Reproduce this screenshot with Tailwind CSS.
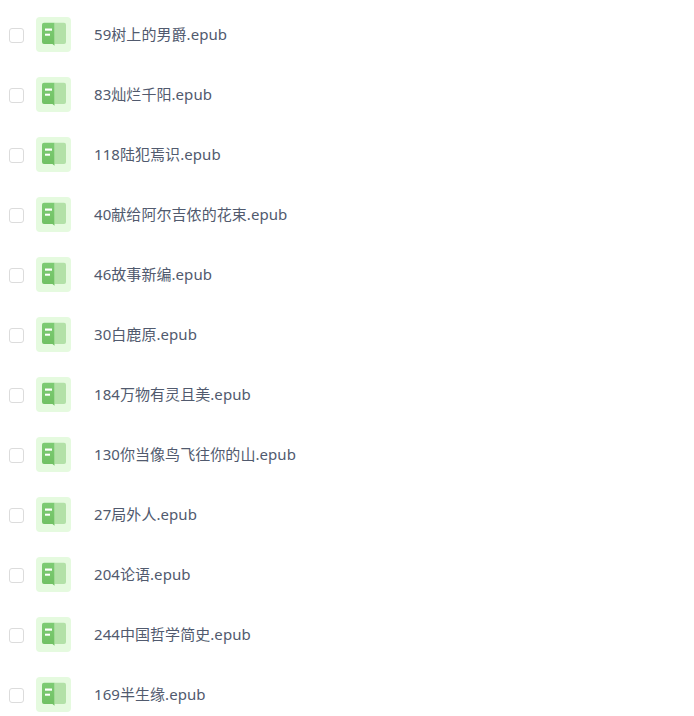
<!DOCTYPE html>
<html lang="zh">
  <head>
    <meta charset="UTF-8" />
    <title>文件列表</title>
    <script src="https://cdn.jsdelivr.net/npm/@tailwindcss/browser@4"></script>
  </head>
  <body class="bg-white overflow-hidden h-[716px] font-['Noto_Sans','Noto_Sans_CJK_SC',sans-serif] text-[15px] tracking-[0.06px] text-[#515a6e]">
    <svg width="0" height="0" class="absolute">
      <defs>
        <linearGradient id="cover" x1="0" y1="0" x2="0" y2="1">
          <stop offset="0" stop-color="#7ecb74" />
          <stop offset="1" stop-color="#6fc062" />
        </linearGradient>
      </defs>
      <symbol id="book" viewBox="0 0 35 35">
        <rect width="35" height="35" rx="4" fill="#e5fadf" />
        <path d="M18.500 5.700h9.500a2 2 0 0 1 2 2v17.300a2 2 0 0 1-2 2h-9.500z" fill="#b3e1a8" />
        <path d="M6 7.700a2 2 0 0 1 2-2h10.500v23l-2-1.700h-8.500a2 2 0 0 1-2-2z" fill="url(#cover)" />
        <rect x="9" y="11.500" width="7" height="2.200" fill="#fff" />
        <rect x="9" y="16.700" width="5" height="2" fill="#fff" />
      </symbol>
    </svg>
    <ul class="pt-[4px]">
      <li class="flex items-center h-[60px]">
        <span class="ml-[9px] mt-[2px] w-[15px] h-[15px] border border-[#dcdcdc] rounded-[3px]"></span>
        <svg class="ml-[12px] w-[35px] h-[35px]"><use href="#book" /></svg>
        <span class="ml-[23px]">59树上的男爵.epub</span>
      </li>
      <li class="flex items-center h-[60px]">
        <span class="ml-[9px] mt-[2px] w-[15px] h-[15px] border border-[#dcdcdc] rounded-[3px]"></span>
        <svg class="ml-[12px] w-[35px] h-[35px]"><use href="#book" /></svg>
        <span class="ml-[23px]">83灿烂千阳.epub</span>
      </li>
      <li class="flex items-center h-[60px]">
        <span class="ml-[9px] mt-[2px] w-[15px] h-[15px] border border-[#dcdcdc] rounded-[3px]"></span>
        <svg class="ml-[12px] w-[35px] h-[35px]"><use href="#book" /></svg>
        <span class="ml-[23px]">118陆犯焉识.epub</span>
      </li>
      <li class="flex items-center h-[60px]">
        <span class="ml-[9px] mt-[2px] w-[15px] h-[15px] border border-[#dcdcdc] rounded-[3px]"></span>
        <svg class="ml-[12px] w-[35px] h-[35px]"><use href="#book" /></svg>
        <span class="ml-[23px]">40献给阿尔吉侬的花束.epub</span>
      </li>
      <li class="flex items-center h-[60px]">
        <span class="ml-[9px] mt-[2px] w-[15px] h-[15px] border border-[#dcdcdc] rounded-[3px]"></span>
        <svg class="ml-[12px] w-[35px] h-[35px]"><use href="#book" /></svg>
        <span class="ml-[23px]">46故事新编.epub</span>
      </li>
      <li class="flex items-center h-[60px]">
        <span class="ml-[9px] mt-[2px] w-[15px] h-[15px] border border-[#dcdcdc] rounded-[3px]"></span>
        <svg class="ml-[12px] w-[35px] h-[35px]"><use href="#book" /></svg>
        <span class="ml-[23px]">30白鹿原.epub</span>
      </li>
      <li class="flex items-center h-[60px]">
        <span class="ml-[9px] mt-[2px] w-[15px] h-[15px] border border-[#dcdcdc] rounded-[3px]"></span>
        <svg class="ml-[12px] w-[35px] h-[35px]"><use href="#book" /></svg>
        <span class="ml-[23px]">184万物有灵且美.epub</span>
      </li>
      <li class="flex items-center h-[60px]">
        <span class="ml-[9px] mt-[2px] w-[15px] h-[15px] border border-[#dcdcdc] rounded-[3px]"></span>
        <svg class="ml-[12px] w-[35px] h-[35px]"><use href="#book" /></svg>
        <span class="ml-[23px]">130你当像鸟飞往你的山.epub</span>
      </li>
      <li class="flex items-center h-[60px]">
        <span class="ml-[9px] mt-[2px] w-[15px] h-[15px] border border-[#dcdcdc] rounded-[3px]"></span>
        <svg class="ml-[12px] w-[35px] h-[35px]"><use href="#book" /></svg>
        <span class="ml-[23px]">27局外人.epub</span>
      </li>
      <li class="flex items-center h-[60px]">
        <span class="ml-[9px] mt-[2px] w-[15px] h-[15px] border border-[#dcdcdc] rounded-[3px]"></span>
        <svg class="ml-[12px] w-[35px] h-[35px]"><use href="#book" /></svg>
        <span class="ml-[23px]">204论语.epub</span>
      </li>
      <li class="flex items-center h-[60px]">
        <span class="ml-[9px] mt-[2px] w-[15px] h-[15px] border border-[#dcdcdc] rounded-[3px]"></span>
        <svg class="ml-[12px] w-[35px] h-[35px]"><use href="#book" /></svg>
        <span class="ml-[23px]">244中国哲学简史.epub</span>
      </li>
      <li class="flex items-center h-[60px]">
        <span class="ml-[9px] mt-[2px] w-[15px] h-[15px] border border-[#dcdcdc] rounded-[3px]"></span>
        <svg class="ml-[12px] w-[35px] h-[35px]"><use href="#book" /></svg>
        <span class="ml-[23px]">169半生缘.epub</span>
      </li>
    </ul>
  </body>
</html>
